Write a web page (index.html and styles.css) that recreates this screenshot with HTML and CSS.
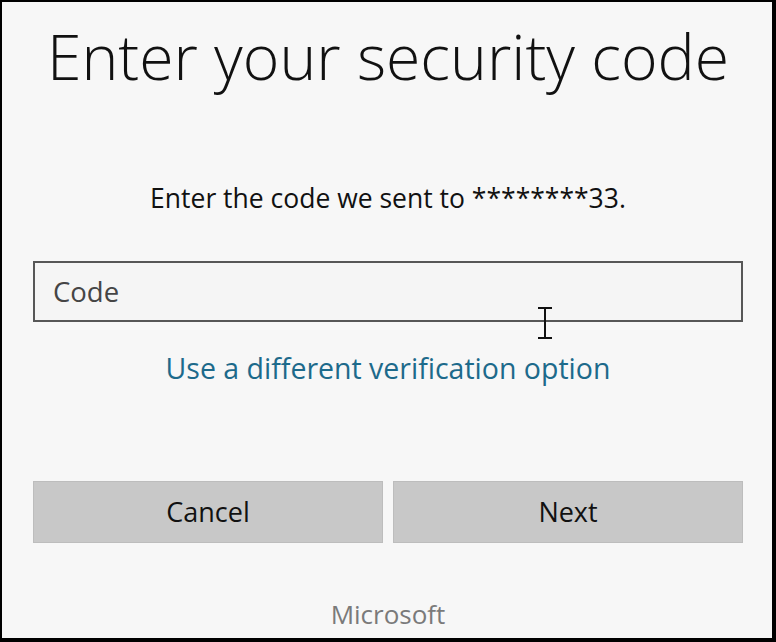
FILE: index.html
```html
<!DOCTYPE html>
<html lang="en">
<head>
<meta charset="utf-8">
<title>Enter your security code</title>
<link rel="stylesheet" href="styles.css">
</head>
<body>
<div class="frame">
  <div class="content">
    <h1 class="title">Enter your security code</h1>
    <p class="subtitle">Enter the code we sent to ********33.</p>
    <div class="field">
      <input class="code-input" type="text" placeholder="Code">
      <svg class="cursor" width="16" height="32" viewBox="0 0 16 32" aria-hidden="true">
        <path d="M1 1 H15 M8 1 V31 M1 31 H15" stroke="#111" stroke-width="2" fill="none"/>
      </svg>
    </div>
    <a class="alt-link" href="#">Use a different verification option</a>
    <div class="buttons">
      <button class="btn" type="button">Cancel</button>
      <button class="btn" type="button">Next</button>
    </div>
    <div class="brand">Microsoft</div>
  </div>
</div>
</body>
</html>
```
FILE: styles.css
```css
html, body {
  margin: 0;
  padding: 0;
  background: #000;
}
.frame {
  box-sizing: border-box;
  width: 776px;
  height: 642px;
  border-style: solid;
  border-color: #000;
  border-width: 2px 4px 4px 2px;
  background: #f7f7f7;
  font-family: "Open Sans", "Noto Sans", sans-serif;
  color: #111;
}
.content {
  display: flex;
  flex-direction: column;
  align-items: stretch;
  padding: 0 29px 0 31px;
}
.title {
  margin: 22.5px 0 0;
  font-size: 62.5px;
  font-weight: 300;
  line-height: 62.5px;
  text-align: center;
  color: #111;
  white-space: nowrap;
}
.subtitle {
  margin: 97.5px 0 0;
  font-size: 26.5px;
  font-weight: 400;
  line-height: 26.5px;
  text-align: center;
  white-space: nowrap;
}
.field {
  position: relative;
  margin-top: 50px;
}
.code-input {
  box-sizing: border-box;
  display: block;
  width: 100%;
  height: 61px;
  margin: 0;
  padding: 0 18px;
  border: 2px solid #575757;
  background: #f5f5f5;
  font-family: "Open Sans", "Noto Sans", sans-serif;
  font-size: 27.5px;
  color: #222;
  outline: none;
}
.code-input::placeholder {
  color: #454545;
  opacity: 1;
}
.cursor {
  position: absolute;
  left: 504px;
  top: 46px;
}
.alt-link {
  margin-top: 31.7px;
  font-size: 28.5px;
  line-height: 28.5px;
  text-align: center;
  color: #1d6a8b;
  text-decoration: none;
  white-space: nowrap;
}
.buttons {
  display: flex;
  gap: 10px;
  margin-top: 98.8px;
}
.btn {
  flex: 1;
  height: 62px;
  margin: 0;
  padding: 0;
  border: 1px solid #bdbdbd;
  background: #c8c8c8;
  font-family: "Open Sans", "Noto Sans", sans-serif;
  font-size: 27px;
  color: #111;
}
.brand {
  margin-top: 57.9px;
  font-size: 26px;
  line-height: 26px;
  text-align: center;
  color: #7a7a7a;
}
```
